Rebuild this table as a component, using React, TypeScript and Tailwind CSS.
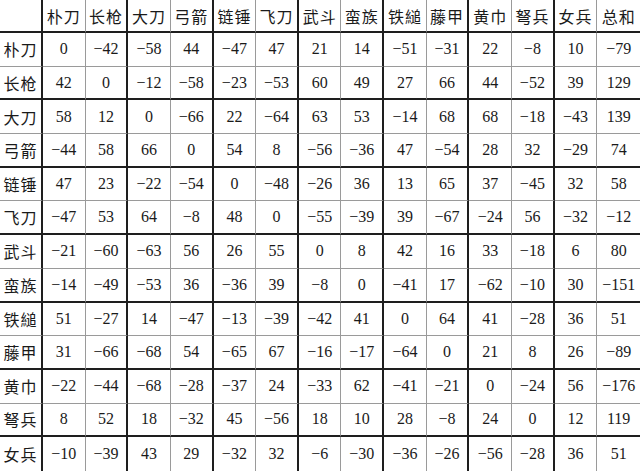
const headers = ['朴刀', '长枪', '大刀', '弓箭', '链锤', '飞刀', '武斗', '蛮族', '铁縋', '藤甲', '黄巾', '弩兵', '女兵', '总和'];

const rows: [string, number[]][] = [
  ['朴刀', [0, -42, -58, 44, -47, 47, 21, 14, -51, -31, 22, -8, 10, -79]],
  ['长枪', [42, 0, -12, -58, -23, -53, 60, 49, 27, 66, 44, -52, 39, 129]],
  ['大刀', [58, 12, 0, -66, 22, -64, 63, 53, -14, 68, 68, -18, -43, 139]],
  ['弓箭', [-44, 58, 66, 0, 54, 8, -56, -36, 47, -54, 28, 32, -29, 74]],
  ['链锤', [47, 23, -22, -54, 0, -48, -26, 36, 13, 65, 37, -45, 32, 58]],
  ['飞刀', [-47, 53, 64, -8, 48, 0, -55, -39, 39, -67, -24, 56, -32, -12]],
  ['武斗', [-21, -60, -63, 56, 26, 55, 0, 8, 42, 16, 33, -18, 6, 80]],
  ['蛮族', [-14, -49, -53, 36, -36, 39, -8, 0, -41, 17, -62, -10, 30, -151]],
  ['铁縋', [51, -27, 14, -47, -13, -39, -42, 41, 0, 64, 41, -28, 36, 51]],
  ['藤甲', [31, -66, -68, 54, -65, 67, -16, -17, -64, 0, 21, 8, 26, -89]],
  ['黄巾', [-22, -44, -68, -28, -37, 24, -33, 62, -41, -21, 0, -24, 56, -176]],
  ['弩兵', [8, 52, 18, -32, 45, -56, 18, 10, 28, -8, 24, 0, 12, 119]],
  ['女兵', [-10, -39, 43, 29, -32, 32, -6, -30, -36, -26, -56, -28, 36, 51]],
];

const fmt = (n: number) => (n < 0 ? '\u2212' + Math.abs(n) : String(n));

// lines alternate: dark/thick after every even column or row, light/thin otherwise
const cellClass = (r: number, c: number) => {
  const right =
    c === 14 ? '' : c % 2 === 0 ? 'border-r-2 border-r-[#1e1e1e]' : 'border-r border-r-[#9a9a9a]';
  const bottom =
    r === 13 ? '' : r % 2 === 0 ? 'border-b-2 border-b-[#1e1e1e]' : 'border-b border-b-[#9a9a9a]';
  return `flex items-center justify-center ${right} ${bottom}`;
};

const cjk = "font-['Noto_Sans_CJK_SC',sans-serif]";
const num = "font-['Liberation_Serif','Noto_Sans_CJK_SC',serif]";

const App = () => {
  return (
    <div className="w-[640px] h-[471px] bg-white text-[#1a1a1a] overflow-hidden">
      <div className="grid grid-cols-[43px_repeat(14,1fr)] grid-rows-[33px_repeat(13,1fr)] w-full h-full">
        <div className={cellClass(0, 0)} />
        {headers.map((h, i) => (
          <div key={h} className={`${cellClass(0, i + 1)} ${cjk} text-[16px] tracking-[1px]`}>
            {h}
          </div>
        ))}
        {rows.map(([label, vals], ri) => (
          <div key={label} className="contents">
            <div className={`${cellClass(ri + 1, 0)} ${cjk} text-[16px] tracking-[1px]`}>{label}</div>
            {vals.map((v, ci) => (
              <div key={ci} className={`${cellClass(ri + 1, ci + 1)} ${num} text-[16px]`}>
                {fmt(v)}
              </div>
            ))}
          </div>
        ))}
      </div>
    </div>
  );
};

export default App;
